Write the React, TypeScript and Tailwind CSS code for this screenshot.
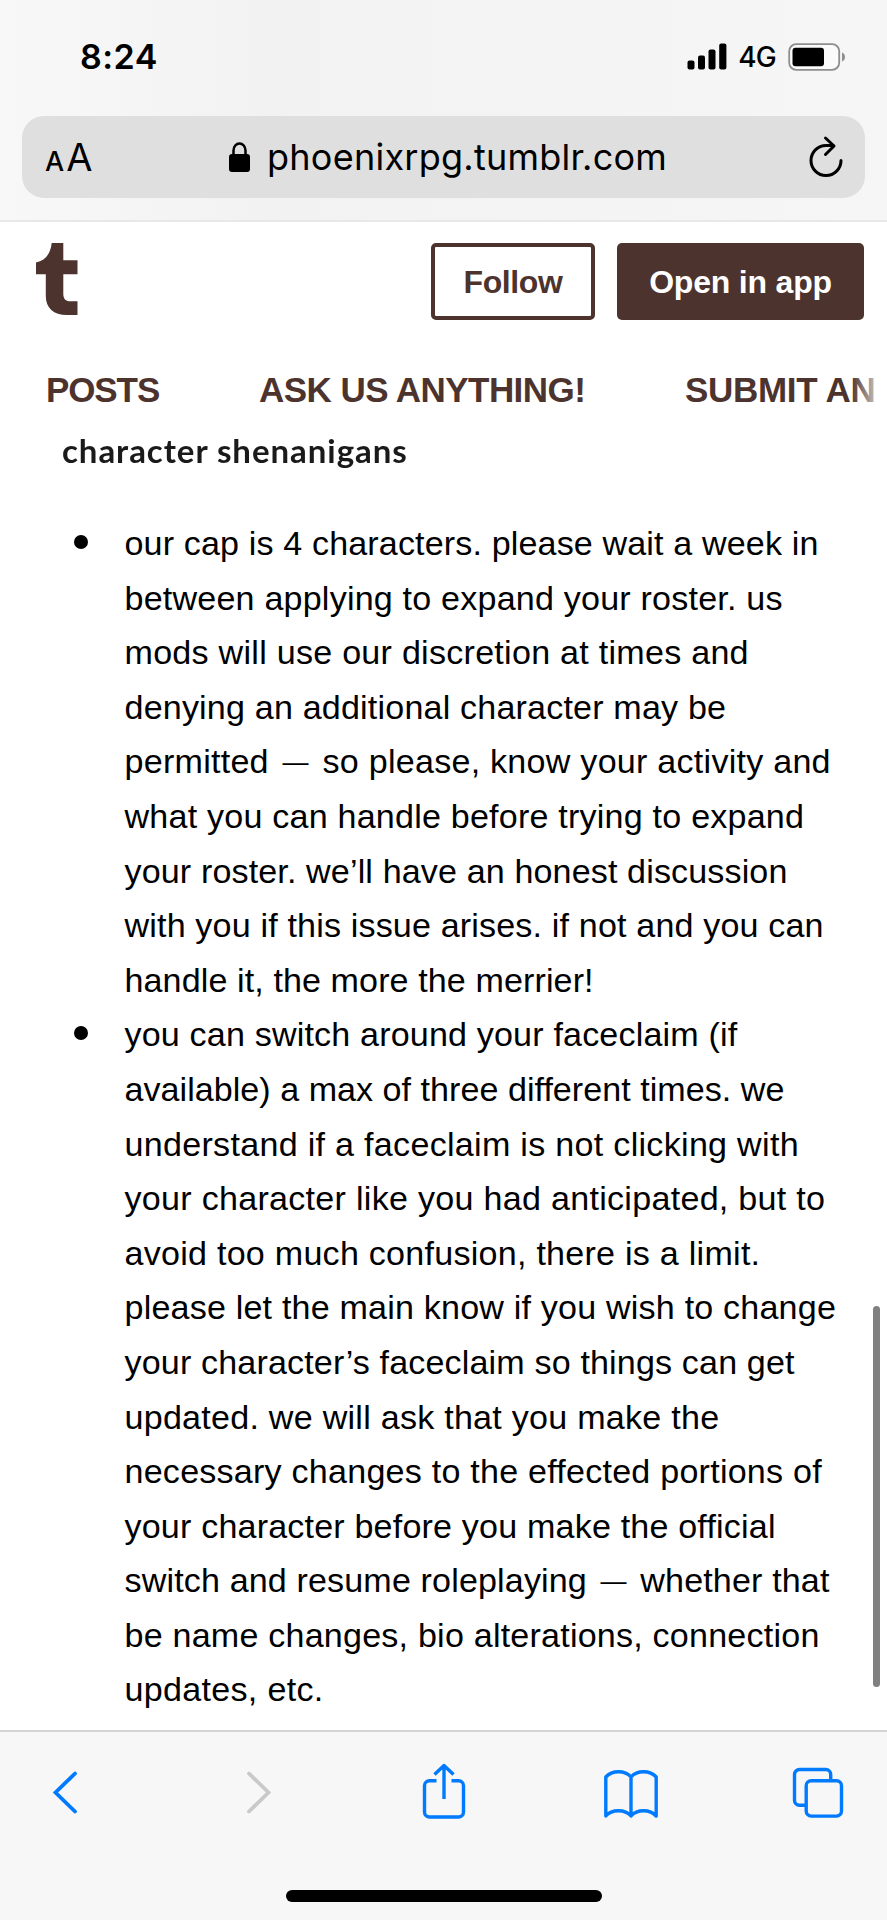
import { clsx } from "clsx"

interface Line {
    text: string
    tracking: string
}

const rules: Line[][] = [
    [
        { text: "our cap is 4 characters. please wait a week in", tracking: "tracking-[0.14px]" },
        { text: "between applying to expand your roster. us", tracking: "tracking-[0.2px]" },
        { text: "mods will use our discretion at times and", tracking: "tracking-[0.26px]" },
        { text: "denying an additional character may be", tracking: "tracking-[0.18px]" },
        { text: "permitted — so please, know your activity and", tracking: "tracking-[0.25px]" },
        { text: "what you can handle before trying to expand", tracking: "tracking-[0.21px]" },
        { text: "your roster. we’ll have an honest discussion", tracking: "tracking-[0.13px]" },
        { text: "with you if this issue arises. if not and you can", tracking: "tracking-[0.16px]" },
        { text: "handle it, the more the merrier!", tracking: "tracking-[0.1px]" },
    ],
    [
        { text: "you can switch around your faceclaim (if", tracking: "tracking-[0.17px]" },
        { text: "available) a max of three different times. we", tracking: "tracking-[0.03px]" },
        { text: "understand if a faceclaim is not clicking with", tracking: "tracking-[0.29px]" },
        { text: "your character like you had anticipated, but to", tracking: "tracking-[0.28px]" },
        { text: "avoid too much confusion, there is a limit.", tracking: "tracking-[0.25px]" },
        { text: "please let the main know if you wish to change", tracking: "tracking-[0.19px]" },
        { text: "your character’s faceclaim so things can get", tracking: "tracking-[0.15px]" },
        { text: "updated. we will ask that you make the", tracking: "tracking-[0.25px]" },
        { text: "necessary changes to the effected portions of", tracking: "tracking-[0.23px]" },
        { text: "your character before you make the official", tracking: "tracking-[0.18px]" },
        { text: "switch and resume roleplaying — whether that", tracking: "tracking-[0.14px]" },
        { text: "be name changes, bio alterations, connection", tracking: "tracking-[0.21px]" },
        { text: "updates, etc.", tracking: "tracking-[0.3px]" },
    ],
]

function SignalIcon() {
    return (
        <svg width="40" height="28" viewBox="0 0 40 28">
            <rect x="0.5" y="17.5" width="7" height="9" rx="2" />
            <rect x="11" y="12.5" width="7" height="14" rx="2" />
            <rect x="21.5" y="6.5" width="7" height="20" rx="2" />
            <rect x="32.2" y="0.5" width="7.2" height="26" rx="2" />
        </svg>
    )
}

function BatteryIcon() {
    return (
        <svg width="58" height="28" viewBox="0 0 58 28">
            <rect x="1.2" y="1.2" width="50" height="25.6" rx="7" fill="#fafafa" stroke="#8e8e8e" strokeWidth="1.8" />
            <rect x="4.5" y="4.8" width="31.500" height="18.400" rx="3" />
            <path d="M54 9.5c2 .8 3 2.500 3 4.500s-1 3.700-3 4.500z" fill="#8e8e8e" />
        </svg>
    )
}

function LockIcon() {
    return (
        <svg width="21" height="30" viewBox="0 0 21 30">
            <rect x="0" y="12" width="21" height="18" rx="3" />
            <path d="M4.500 13V8.500a6 7 0 0 1 12 0V13" fill="none" stroke="#000" strokeWidth="2.500" />
        </svg>
    )
}

function ReloadIcon() {
    return (
        <svg width="36" height="44" viewBox="0 0 36 44" fill="none" stroke="#000" strokeWidth="3" strokeLinecap="round" strokeLinejoin="round">
            <path d="M33 25.500A15 15 0 1 1 18 10.500h7" />
            <path d="M17.500 3L26 11l-8.500 8.500" />
        </svg>
    )
}

function TumblrLogo() {
    return (
        <svg width="42" height="72" viewBox="0 0 42 72" fill="#4d332d">
            <path d="M15.700 0h11.600v17.300h14.200v13.900H27.300v19.500c0 5 2.300 7.600 7 7.600h7.200V72H31C17.500 72 9.800 65 9.800 53V31.200H0V19.500C9.500 17.500 14.500 11 15.700 0z" />
        </svg>
    )
}

function StatusBar() {
    return (
        <div className="flex h-[116px] items-center justify-between pr-[41px] pb-[3px] pl-[80px]">
            <span className="text-[34px] font-semibold tracking-[0.5px]">8:24</span>
            <div className="flex items-center">
                <SignalIcon />
                <span className="mr-[12px] ml-[11px] text-[28px] font-medium tracking-[-0.8px]">4G</span>
                <BatteryIcon />
            </div>
        </div>
    )
}

function AddressBar() {
    return (
        <div className="mx-[22px] flex h-[82px] items-center justify-between rounded-[22px] bg-[#dfdfdf] pr-[21px] pl-[23px]">
            <div className="flex w-[184px] items-baseline gap-[2px]">
                <span className="text-[27px] font-medium">A</span>
                <span className="text-[38px]">A</span>
            </div>
            <div className="flex flex-1 items-center gap-[17px]">
                <LockIcon />
                <span className="text-[36px] tracking-[0.25px]">phoenixrpg.tumblr.com</span>
            </div>
            <ReloadIcon />
        </div>
    )
}

function BlogHeader() {
    return (
        <header className="text-[#4d332d]">
            <div className="flex items-start justify-between pt-[21px] pr-[23px] pl-[36px]">
                <TumblrLogo />
                <div className="flex gap-[22px] text-[32px] font-bold">
                    <button className="h-[77px] w-[164px] rounded-[5px] border-4 border-[#4d332d] tracking-[-0.4px]">Follow</button>
                    <button className="h-[77px] w-[247px] rounded-[5px] bg-[#4d332d] tracking-[-0.2px] text-white">Open in app</button>
                </div>
            </div>
            <nav className="relative mt-[46px] flex h-[48px] items-center overflow-hidden pl-[46px] text-[35px] font-bold whitespace-nowrap">
                <span className="w-[213px] shrink-0 tracking-[-1.1px]">POSTS</span>
                <span className="w-[426px] shrink-0 tracking-[-0.55px]">ASK US ANYTHING!</span>
                <span className="shrink-0 tracking-[-0.3px]">SUBMIT AN</span>
                {/* Fades out the tabs that run past the edge */}
                <div className="absolute top-0 right-0 h-full w-[36px] bg-linear-to-r from-white/0 to-white" />
            </nav>
        </header>
    )
}

function RuleLine({ text, tracking }: Line) {
    const [before, after] = text.split("—")
    return (
        <span className={clsx("block whitespace-nowrap", tracking)}>
            {before}
            {after && (
                <>
                    <span className="px-[4px] align-[2px] text-[26px] leading-none">—</span>
                    {after}
                </>
            )}
        </span>
    )
}

function Toolbar() {
    return (
        <footer className="flex h-[190px] flex-col items-center justify-between border-t-2 border-[#d4d4d4] bg-[#f7f7f7] pb-[18px]">
            <div className="flex w-full items-center pt-[30px] pl-[51px] text-[#007aff]">
                <svg width="28" height="60" viewBox="0 0 28 60" fill="none" stroke="currentColor" strokeWidth="3.800" strokeLinecap="round">
                    <path d="M24 11.500L4.500 30.500 24 49.500" />
                </svg>
                <svg width="28" height="60" viewBox="0 0 28 60" fill="none" stroke="#c9c9c9" strokeWidth="3.800" strokeLinecap="round" className="ml-[167px]">
                    <path d="M3 11.500l19.500 19L3 49.500" />
                </svg>
                <svg width="44" height="60" viewBox="0 0 44 60" fill="none" stroke="currentColor" strokeWidth="3.400" strokeLinejoin="round" className="ml-[148px]">
                    <path d="M14.500 18.700H7.500a5 5 0 0 0-5 5V50a5 5 0 0 0 5 5h29a5 5 0 0 0 5-5V23.700a5 5 0 0 0-5-5H29.500" />
                    <path d="M22 37V4M12.500 12.500L22 3.500l9.500 9" />
                </svg>
                <svg width="54" height="60" viewBox="0 0 54 60" fill="none" stroke="currentColor" strokeWidth="3.400" strokeLinejoin="round" className="ml-[138px]">
                    <path d="M27 54V15c-6-7-19-7-25.200 0v39c6-7 19.200-7 25.200 0 6-7 19-7 25.200 0V15c-6.200-7-19.200-7-25.200 0" />
                </svg>
                <svg width="54" height="60" viewBox="0 0 54 60" fill="none" stroke="currentColor" strokeWidth="3.400" className="ml-[133px]">
                    <path d="M15 43.200H8.500a5 5 0 0 1-5-5V12.500a5 5 0 0 1 5-5h26.200a5 5 0 0 1 5 5v6" />
                    <rect x="15.200" y="18.800" width="35.300" height="35.300" rx="5" />
                </svg>
            </div>
            <div className="h-[12px] w-[316px] rounded-full bg-black" />
        </footer>
    )
}

export default function App() {
    return (
        <div className="relative flex h-[1920px] w-[887px] flex-col overflow-hidden bg-white font-['Liberation_Sans',Arial,sans-serif] text-black">
            <div className="h-[222px] border-b-2 border-[#e8e8e8] bg-linear-to-r from-[#f8f8f8] via-[#f2f2f2] via-30% to-[#f6f6f6] font-['Inter',sans-serif]">
                <StatusBar />
                <AddressBar />
            </div>

            <BlogHeader />

            <main className="flex-1">
                <h2 className="mt-[12px] ml-[62px] h-[48px] font-['Lato',sans-serif] text-[33px] leading-[48px] font-bold tracking-[0.95px] text-[#1a1a1a] blur-[0.5px]">
                    character shenanigans
                </h2>
                <ul className="mt-[42px] text-[34.1px] leading-[54.6px]">
                    {rules.map((lines, i) => (
                        <li key={i} className="flex items-start pl-[74px]">
                            <span className="mt-[19px] mr-[36.5px] size-[14px] rounded-full bg-black" />
                            <p>
                                {lines.map((line) => (
                                    <RuleLine key={line.text} {...line} />
                                ))}
                            </p>
                        </li>
                    ))}
                </ul>
            </main>

            {/* Scroll indicator */}
            <div className="absolute top-[1306px] right-[7px] h-[381px] w-[7px] rounded-full bg-[#808080]" />

            <Toolbar />
        </div>
    )
}
